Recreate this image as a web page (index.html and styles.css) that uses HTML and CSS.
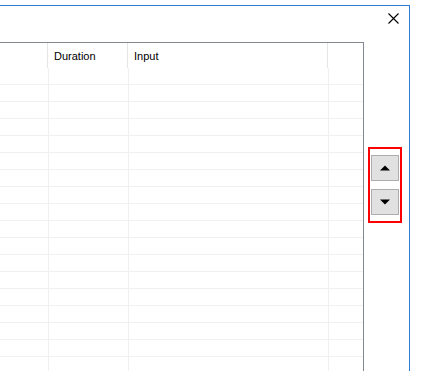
FILE: index.html
```html
<!DOCTYPE html>
<html>
<head>
<meta charset="utf-8">
<link rel="stylesheet" href="styles.css">
</head>
<body>
<div class="window">
  <div class="titlebar">
    <svg class="close" width="11" height="11" viewBox="0 0 11 11"><path d="M0.5 0.5 L10.5 10.5 M10.5 0.5 L0.5 10.5" stroke="#000" stroke-width="1.1" fill="none"/></svg>
  </div>
  <div class="content">
    <div class="table">
      <div class="hdr">
        <div class="hcell"></div>
        <div class="hcell">Duration</div>
        <div class="hcell">Input</div>
        <div class="hcell last"></div>
      </div>
      <div class="body">
        <div class="row"><div></div><div></div><div></div><div></div></div>
        <div class="row"><div></div><div></div><div></div><div></div></div>
        <div class="row"><div></div><div></div><div></div><div></div></div>
        <div class="row"><div></div><div></div><div></div><div></div></div>
        <div class="row"><div></div><div></div><div></div><div></div></div>
        <div class="row"><div></div><div></div><div></div><div></div></div>
        <div class="row"><div></div><div></div><div></div><div></div></div>
        <div class="row"><div></div><div></div><div></div><div></div></div>
        <div class="row"><div></div><div></div><div></div><div></div></div>
        <div class="row"><div></div><div></div><div></div><div></div></div>
        <div class="row"><div></div><div></div><div></div><div></div></div>
        <div class="row"><div></div><div></div><div></div><div></div></div>
        <div class="row"><div></div><div></div><div></div><div></div></div>
        <div class="row"><div></div><div></div><div></div><div></div></div>
        <div class="row"><div></div><div></div><div></div><div></div></div>
        <div class="row"><div></div><div></div><div></div><div></div></div>
        <div class="row"><div></div><div></div><div></div><div></div></div>
        <div class="row"><div></div><div></div><div></div><div></div></div>
        <div class="row"><div></div><div></div><div></div><div></div></div>
      </div>
    </div>
    <div class="movers">
      <div class="btn"><svg width="10" height="6" viewBox="0 0 10 6"><polygon points="0,5.5 10,5.5 5,0.5" fill="#000"/></svg></div>
      <div class="btn"><svg width="10" height="6" viewBox="0 0 10 6"><polygon points="0,0.5 10,0.5 5,5.5" fill="#000"/></svg></div>
    </div>
  </div>
</div>
</body>
</html>
```

FILE: styles.css
```css
* { box-sizing: border-box; }
html, body { margin: 0; padding: 0; background: #fff; }
body {
  width: 429px;
  height: 377px;
  overflow: hidden;
  font-family: "Liberation Sans", Arial, sans-serif;
  font-size: 11px;
  color: #000;
}
.window {
  margin-top: 5px;
  width: 410px;
  height: 366px;
  border-top: 1px solid #2b7bd3;
  border-right: 1px solid #2b7bd3;
  display: flex;
  flex-direction: column;
  overflow: hidden;
}
.titlebar {
  height: 36px;
  flex: none;
  display: flex;
  justify-content: flex-end;
  align-items: flex-start;
  padding-top: 7px;
  padding-right: 10px;
}
.close { display: block; }
.content {
  flex: 1;
  display: flex;
  align-items: flex-start;
  gap: 4px;
  min-height: 0;
}
.table {
  width: 364px;
  flex: none;
  border-top: 1px solid #828790;
  border-right: 1px solid #828790;
  height: 400px;
}
.hdr {
  display: grid;
  grid-template-columns: 48px 80px 200px 1fr;
  height: 25px;
}
.hcell {
  border-right: 1px solid #e5e5e5;
  padding-left: 6px;
  padding-top: 7px;
  line-height: 13px;
  white-space: nowrap;
}
.hcell.last { border-right: none; }
.row {
  display: grid;
  grid-template-columns: 49px 80px 200px 1fr;
  height: 17px;
  border-bottom: 1px solid #f0f0f0;
}
.row > div { border-right: 1px solid #f0f0f0; }
.row > div:last-child { border-right: none; }
.movers {
  margin-top: 105px;
  width: 34px;
  border: 2px solid #ff0000;
  padding: 6px 1px;
  display: flex;
  flex-direction: column;
  gap: 8px;
}
.btn {
  height: 26px;
  background: #e1e1e1;
  border: 1px solid #adadad;
  display: flex;
  align-items: center;
  justify-content: center;
}
.btn svg { display: block; }
```
